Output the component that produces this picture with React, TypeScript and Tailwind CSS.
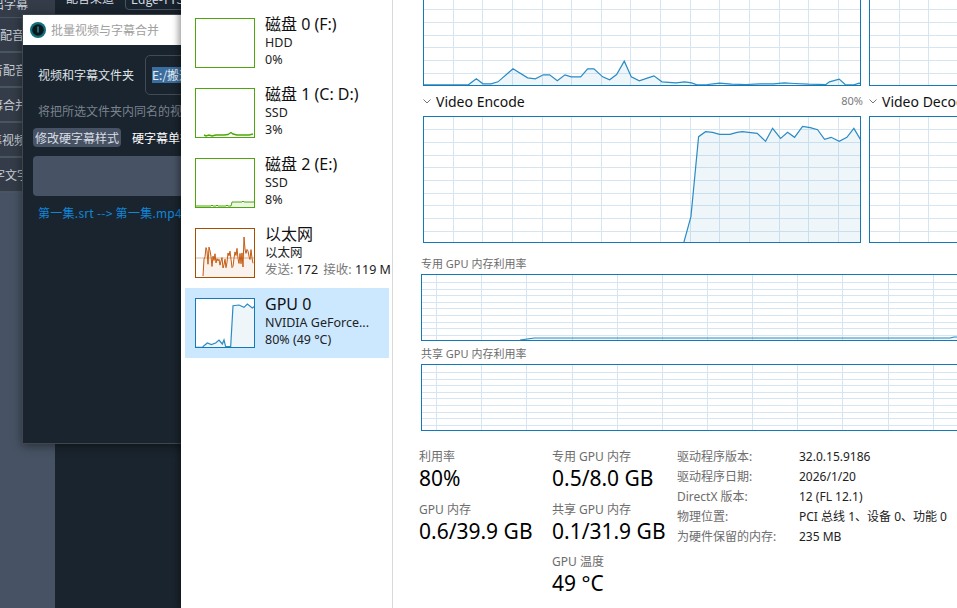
import React from 'react';

type Pt = [number, number];

const BLUE = '#1479b8';
const GRID = '#d5e6f2';
const LINE = '#2b8bc4';
const GREEN = '#4da60c';

// traced from the picture, in zoomed pixels
const topLine: Pt[] = [[38,256],[165,256],[188,238],[207,253],[230,253],[250,247],[293,208],[335,235],[357,238],[380,226],[398,226],[420,244],[442,226],[460,232],[487,232],[507,208],[525,208],[550,232],[570,241],[590,225],[612,185],[632,232],[655,244],[680,235],[697,229],[720,247],[760,250],[785,247],[805,250],[820,256],[850,255],[885,251],[920,254],[960,255],[1000,253],[1040,253],[1070,250],[1100,252],[1140,254],[1190,255],[1200,247],[1228,239],[1245,255],[1270,256],[1285,251],[1292,253]];
const encodeLine: Pt[] = [[782,730],[803,650],[825,410],[845,395],[865,397],[885,403],[915,403],[935,397],[950,395],[993,400],[1017,424],[1037,385],[1060,415],[1080,397],[1100,412],[1123,379],[1145,383],[1166,389],[1186,418],[1205,412],[1228,424],[1250,412],[1270,385],[1292,424]];
const gpuThumb: Pt[] = [[46,410],[65,410],[70,405],[80,397],[92,402],[105,397],[115,388],[125,400],[130,388],[135,408],[150,408],[157,285],[175,283],[190,290],[200,280],[215,292],[224,285]];

const columnsWide = [453, 482, 512, 542, 571, 601, 630, 660, 690, 719, 749, 779, 808, 838];
const columnsMem = [436, 481, 526, 572, 617, 662, 707, 752, 797, 842, 888, 933];
const rowsTop = [9, 22, 35, 47, 60, 73];
const rowsEncode = [12, 25, 38, 50, 63, 76, 88, 101, 114];
const rowsMem = [7, 14, 20, 27, 33, 40, 47, 53, 60];

const toPoints = (line: Pt[]) => line.map((p) => p.join(',')).join(' ');

function Chart({ width, height, left, columns, rows, line, topOpen }: {
  width: number; height: number; left: number; columns: number[]; rows: number[]; line?: Pt[]; topOpen?: boolean;
}) {
  const pts = line ? toPoints(line) : '';
  return (
    <div className={`shrink-0 border-[#1479b8] bg-white ${topOpen ? 'border-x border-b' : 'border'}`} style={{ width, height }}>
      <svg width={width - 2} height={height - (topOpen ? 1 : 2)} className="block">
        {columns.map((c) => <line key={c} x1={c - left + 0.5} x2={c - left + 0.5} y1={0} y2={height} stroke={GRID} strokeWidth={1} />)}
        {rows.map((r) => <line key={r} x1={0} x2={width} y1={r + 0.5} y2={r + 0.5} stroke={GRID} strokeWidth={1} />)}
        {line && (
          <>
            <polygon points={`${line[0][0]},${height} ${pts} ${line[line.length - 1][0]},${height}`} fill={LINE} fillOpacity={0.08} />
            <polyline points={pts} fill="none" stroke={LINE} strokeWidth={1.2} />
          </>
        )}
      </svg>
    </div>
  );
}

const mapTop = topLine.map(([x, y]): Pt => [(x - 38) / 2.866, y / 3 - 0.5]);
const mapEncode = encodeLine.map(([x, y]): Pt => [(x - 38) / 2.866, y / 3 - 117]);
const mapGpu = gpuThumb.map(([x, y]): Pt => [(x - 46) / 3, (y - 265) / 3]);

// noisy ethernet trace: one sample per pixel, with the tall spike near the right
const netLine: Pt[] = [[7, 47], [8, 30]];
for (let x = 9; x < 58; x++) {
  const noise = Math.abs(Math.sin(x * 12.9898) * 43758.5453) % 1;
  netLine.push([x, x === 48 ? 8 : x === 49 ? 20 : x === 47 ? 38 : 18 + noise * 21]);
}
const disk1Line: Pt[] = [[8,46],[10,47],[13,46],[16,47],[20,46],[24,46],[28,46],[32,45.5],[35,43.5],[37,45],[41,46],[45,46],[49,46],[53,46],[57,45]];
const disk2Line: Pt[] = [[0,47],[15,47],[16,46],[17,47],[20,47],[21,46],[22,47],[30,47],[31,46],[32,47],[35,47],[36,43],[38,43],[46,43],[47,42],[48,43],[58,43]];

function Thumb({ color, children }: { color: string; children?: React.ReactNode }) {
  return (
    <div className="h-[50px] w-[60px] shrink-0 border bg-white" style={{ borderColor: color }}>
      <svg width={58} height={48} className="block">{children}</svg>
    </div>
  );
}

function DeviceRow({ title, sub, third, color, selected, children }: {
  title: string; sub: string; third: React.ReactNode; color: string; selected?: boolean; children?: React.ReactNode;
}) {
  return (
    <div className={`flex h-[70px] w-[204px] pl-[10px] pt-[10px] ${selected ? 'bg-[#cce8ff]' : ''}`}>
      <Thumb color={color}>{children}</Thumb>
      <div className="-mt-[4px] ml-[10px] whitespace-nowrap">
        <div className="text-[16px] leading-[20px] text-[#111]">{title}</div>
        <div className="text-[12.5px] leading-[17px] text-[#222]">{sub}</div>
        <div className="text-[12.5px] leading-[17px] text-[#222]">{third}</div>
      </div>
    </div>
  );
}

function Chevron() {
  return (
    <svg width={8} height={5} viewBox="0 0 8 5" className="shrink-0">
      <path d="M0.5 0.5 L4 4 L7.5 0.5" fill="none" stroke="#777" strokeWidth={1} />
    </svg>
  );
}

function Stat({ label, value }: { label: string; value: string }) {
  return (
    <div className="h-[52.5px] whitespace-nowrap">
      <div className="text-[12px] leading-[20px] text-[#6d6d6d]">{label}</div>
      <div className="text-[21px] leading-[22px] text-black">{value}</div>
    </div>
  );
}

const specs = [
  ['驱动程序版本:', '32.0.15.9186'],
  ['驱动程序日期:', '2026/1/20'],
  ['DirectX 版本:', '12 (FL 12.1)'],
  ['物理位置:', 'PCI 总线 1、设备 0、功能 0'],
  ['为硬件保留的内存:', '235 MB'],
];

const navRows = [
  { text: '音配音', cls: '-ml-[12px]' },
  { text: '音配音', cls: '-ml-[9px]' },
  { text: '幕合并', cls: '-ml-[9px]' },
  { text: '幕视频', cls: '-ml-[10px]' },
  { text: '字文字', cls: '-ml-[7px]' },
];

function BackWindow() {
  return (
    <div className="relative h-full w-[181px] shrink-0 overflow-hidden bg-[#1a242e] font-['Noto_Sans_CJK_SC','Noto_Sans',sans-serif]">
      {/* app behind the dialog */}
      <div className="flex h-full">
        <div className="w-[55px] shrink-0 bg-[#475364]">
          <div className="flex h-[18px] items-start overflow-hidden border-b border-[#4a5563] bg-[#333c48] text-[12px] text-[#c9ced6]">
            <span className="-ml-[8px] -mt-[5px] whitespace-nowrap">出字幕</span>
          </div>
          {navRows.map((r) => (
            <div key={r.cls + r.text} className="flex h-[35px] items-center overflow-hidden whitespace-nowrap border-b-2 border-[#4a5563] bg-[#333c48] text-[12px] text-[#c9ced6]">
              <span className={r.cls}>{r.text}</span>
            </div>
          ))}
        </div>
        <div className="flex h-[8px] items-start gap-[11px] whitespace-nowrap pl-[11px] text-[12px] leading-[8px] text-[#d8dde3]">
          <span className="-mt-[6px]">配音渠道</span>
          <span className="-mt-[8px] h-[18px] rounded-[4px] border border-[#4a5564] px-[5px] leading-[11px]">Edge-TTS</span>
        </div>
      </div>

      {/* batch merge dialog */}
      <div className="absolute left-[22px] top-[14px] h-[430px] w-[190px] border border-[#3f464e] bg-[#1a242e] shadow-[0_2px_10px_rgba(0,0,0,0.45)]">
        <div className="flex h-[30px] items-center bg-white pl-[7px]">
          <svg width={16} height={16} viewBox="0 0 16 16" className="shrink-0">
            <circle cx={8} cy={8} r={8} fill="#12707a" />
            <circle cx={8} cy={8} r={5.8} fill="#0c1a1e" />
            <rect x={7.2} y={4.5} width={1.6} height={6} fill="#2c7f88" />
          </svg>
          <span className="ml-[5px] whitespace-nowrap text-[12px] text-[#a0a0a0]">批量视频与字幕合并</span>
        </div>
        <div className="overflow-hidden pl-[10px]">
          <div className="mt-[10px] flex h-[40px] items-center whitespace-nowrap pl-[5px]">
            <span className="w-[107px] shrink-0 text-[12px] text-[#dfe3e8]">视频和字幕文件夹</span>
            <div className="flex h-[40px] w-[80px] shrink-0 items-center rounded-[5px] border border-[#414b58] pl-[6px] text-[12px]">
              <span className="bg-[#3b6d9e] leading-[16px] text-[#e6edf4]">E:/搬运工</span>
            </div>
          </div>
          <div className="mt-[7px] whitespace-nowrap pl-[5px] text-[12px] leading-[18px] text-[#79828d]">将把所选文件夹内同名的视频和字幕</div>
          <div className="mt-[8px] flex items-center whitespace-nowrap">
            <span className="flex h-[19px] w-[88px] shrink-0 items-center justify-center rounded-[4px] bg-[#475364] text-[12px] text-[#d9dee4]">修改硬字幕样式</span>
            <span className="ml-[11px] text-[12px] text-white">硬字幕单行</span>
          </div>
          <div className="mt-[9px] h-[40px] w-[170px] rounded-[4px] bg-[#475364]" />
          <div className="mt-[8px] whitespace-nowrap pl-[5px] text-[12px] leading-[18px] tracking-[0.26px] text-[#0f86d8]">第一集.srt --&gt; 第一集.mp4</div>
        </div>
      </div>
    </div>
  );
}

function DeviceList() {
  return (
    <div className="h-full w-[212px] shrink-0 overflow-hidden border-r border-[#d9d9d9] pl-[4px] pt-[8px]">
      <DeviceRow title="磁盘 0 (F:)" sub="HDD" third="0%" color={GREEN} />
      <DeviceRow title="磁盘 1 (C: D:)" sub="SSD" third="3%" color={GREEN}>
        <polyline points={toPoints(disk1Line)} fill="none" stroke={GREEN} strokeWidth={1.4} />
      </DeviceRow>
      <DeviceRow title="磁盘 2 (E:)" sub="SSD" third="8%" color={GREEN}>
        <polygon points={`35,48 ${toPoints(disk2Line.slice(9))} 58,48`} fill={GREEN} fillOpacity={0.1} />
        <polyline points={toPoints(disk2Line)} fill="none" stroke={GREEN} strokeWidth={1} />
      </DeviceRow>
      <DeviceRow
        title="以太网"
        sub="以太网"
        color="#a74f01"
        third={<><span className="text-[#7a7a7a]">发送:</span> 172 <span className="ml-[2px] text-[#7a7a7a]">接收:</span> 119 M</>}
      >
        <line x1={0} x2={58} y1={29} y2={29} stroke="#d8b89a" strokeWidth={1} />
        <polygon points={`7,48 ${toPoints(netLine)} 58,48`} fill="#c55a11" fillOpacity={0.08} />
        <polyline points={toPoints(netLine)} fill="none" stroke="#c55a11" strokeWidth={1} />
      </DeviceRow>
      <DeviceRow title="GPU 0" sub="NVIDIA GeForce..." third="80% (49 °C)" color={BLUE} selected>
        <polygon points={`0,48 ${toPoints(mapGpu)} 58,48`} fill={LINE} fillOpacity={0.08} />
        <polyline points={toPoints(mapGpu)} fill="none" stroke={LINE} strokeWidth={1.2} />
      </DeviceRow>
    </div>
  );
}

function GpuPanel() {
  const decodeColumns = columnsWide.slice(0, 4).map((c) => c + 446);
  return (
    <div className="h-full flex-1 overflow-hidden">
      <div className="flex gap-[8px] pl-[30px]">
        <Chart width={438} height={86} left={424} columns={columnsWide} rows={rowsTop} line={mapTop} topOpen />
        <Chart width={120} height={86} left={870} columns={decodeColumns} rows={rowsTop} topOpen />
      </div>

      <div className="flex h-[30px] items-center whitespace-nowrap pl-[30px]">
        <div className="flex w-[446px] items-center">
          <Chevron />
          <span className="ml-[5px] text-[14px] text-[#111]">Video Encode</span>
          <span className="ml-auto mr-[6px] text-[11px] text-[#7a7a7a]">80%</span>
        </div>
        <Chevron />
        <span className="ml-[5px] text-[14px] text-[#111]">Video Decode</span>
      </div>

      <div className="flex gap-[8px] pl-[30px]">
        <Chart width={438} height={127} left={424} columns={columnsWide} rows={rowsEncode} line={mapEncode} />
        <Chart width={120} height={127} left={870} columns={decodeColumns} rows={rowsEncode} />
      </div>

      <div className="mt-[11px] whitespace-nowrap pl-[28px] text-[11px] leading-[20px] text-[#6d6d6d]">专用 GPU 内存利用率</div>
      <div className="ml-[28px] w-[560px]">
        <Chart width={560} height={67} left={422} columns={columnsMem} rows={rowsMem} line={[[98, 65], [112, 63], [528, 63], [532, 62], [558, 62]]} />
      </div>

      <div className="mt-[3px] whitespace-nowrap pl-[28px] text-[11px] leading-[20px] text-[#6d6d6d]">共享 GPU 内存利用率</div>
      <div className="ml-[28px] w-[560px]">
        <Chart width={560} height={67} left={422} columns={columnsMem} rows={rowsMem} />
      </div>

      <div className="mt-[16px] flex pl-[26px]">
        <div className="w-[133px] shrink-0">
          <Stat label="利用率" value="80%" />
          <Stat label="GPU 内存" value="0.6/39.9 GB" />
        </div>
        <div className="w-[125px] shrink-0">
          <Stat label="专用 GPU 内存" value="0.5/8.0 GB" />
          <Stat label="共享 GPU 内存" value="0.1/31.9 GB" />
          <Stat label="GPU 温度" value="49 °C" />
        </div>
        <div className="flex-1 whitespace-nowrap text-[12px] leading-[20px]">
          {specs.map(([k, v]) => (
            <div key={k} className="flex h-[20px]">
              <span className="w-[122px] shrink-0 text-[#6d6d6d]">{k}</span>
              <span className="text-[#222]">{v}</span>
            </div>
          ))}
        </div>
      </div>
    </div>
  );
}

export default function App() {
  return (
    <div className="flex h-[608px] w-[957px] overflow-hidden bg-white">
      <BackWindow />
      <div className="relative flex h-full flex-1 bg-white font-['Noto_Sans','Noto_Sans_CJK_SC',sans-serif] shadow-[-3px_0_6px_rgba(0,0,0,0.35)]">
        <DeviceList />
        <GpuPanel />
      </div>
    </div>
  );
}
